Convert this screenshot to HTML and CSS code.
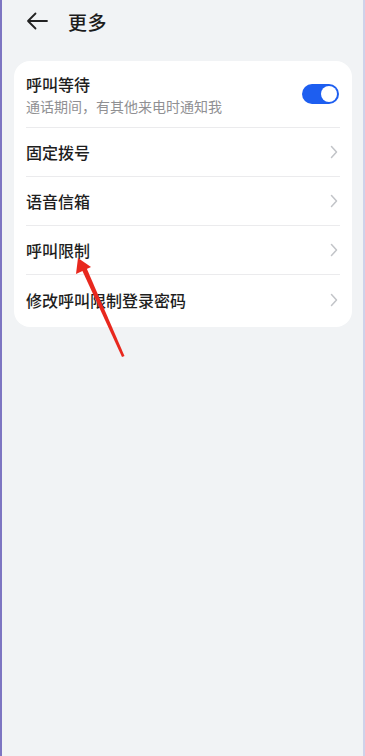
FILE: index.html
```html
<!DOCTYPE html>
<html lang="zh-CN">
<head>
    <meta charset="UTF-8">
    <meta name="viewport" content="width=device-width, initial-scale=1.0">
    <title>更多</title>
    <link rel="stylesheet" href="styles.css">
</head>
<body>
    <div class="screen">
        <!-- Header -->
        <div class="header">
            <svg class="back" width="22" height="18" viewBox="0 0 22 18">
                <path d="M21 9H2M9.5 1.5L2 9l7.5 7.5" fill="none" stroke="#222" stroke-width="1.8" stroke-linecap="round" stroke-linejoin="round"/>
            </svg>
            <h1>更多</h1>
        </div>

        <!-- Settings card -->
        <div class="card">
            <div class="row row-tall">
                <div class="row-text">
                    <div class="row-title">呼叫等待</div>
                    <div class="row-sub">通话期间，有其他来电时通知我</div>
                </div>
                <div class="switch on"><span class="knob"></span></div>
            </div>
            <div class="row">
                <div class="row-title">固定拨号</div>
                <svg class="chevron" width="8" height="14" viewBox="0 0 8 14"><path d="M1.5 1.5L6.5 7l-5 5.5" fill="none" stroke="#c2c4c8" stroke-width="1.5" stroke-linecap="round" stroke-linejoin="round"/></svg>
            </div>
            <div class="row">
                <div class="row-title">语音信箱</div>
                <svg class="chevron" width="8" height="14" viewBox="0 0 8 14"><path d="M1.5 1.5L6.5 7l-5 5.5" fill="none" stroke="#c2c4c8" stroke-width="1.5" stroke-linecap="round" stroke-linejoin="round"/></svg>
            </div>
            <div class="row">
                <div class="row-title">呼叫限制</div>
                <svg class="chevron" width="8" height="14" viewBox="0 0 8 14"><path d="M1.5 1.5L6.5 7l-5 5.5" fill="none" stroke="#c2c4c8" stroke-width="1.5" stroke-linecap="round" stroke-linejoin="round"/></svg>
            </div>
            <div class="row row-last">
                <div class="row-title">修改呼叫限制登录密码</div>
                <svg class="chevron" width="8" height="14" viewBox="0 0 8 14"><path d="M1.5 1.5L6.5 7l-5 5.5" fill="none" stroke="#c2c4c8" stroke-width="1.5" stroke-linecap="round" stroke-linejoin="round"/></svg>
            </div>
        </div>

        <!-- Red annotation arrow drawn over the screenshot -->
        <svg class="annotation" width="365" height="756" viewBox="0 0 365 756">
            <path d="M122 357L124.5 356L86.5 268L82 270Z" fill="#e8281e"/>
            <path d="M78 258L76 274L91 267Z" fill="#e8281e"/>
        </svg>
    </div>
</body>
</html>
```

FILE: styles.css
```css
* {
    margin: 0;
    padding: 0;
    box-sizing: border-box;
}

body {
    font-family: "Noto Sans CJK SC", "Noto Sans", sans-serif;
    background: #f1f3f5;
}

.screen {
    position: relative;
    width: 365px;
    height: 756px;
    background: #f1f3f5;
    border-left: 2px solid #7d75c2;
    border-right: 2px solid #cfd2ea;
    overflow: hidden;
}

/* Header */
.header {
    display: flex;
    align-items: center;
    height: 42px;
    padding-left: 24px;
}

.back {
    margin-right: 20px;
}

.header h1 {
    font-size: 19px;
    font-weight: 500;
    color: #1c1c1c;
    letter-spacing: 0.5px;
}

/* Card */
.card {
    margin: 19px 11px 0 12px;
    background: #fff;
    border-radius: 16px;
    padding: 0 12px 3px;
}

.row {
    display: flex;
    align-items: center;
    justify-content: space-between;
    height: 49px;
    border-bottom: 1px solid #ebebed;
}

.row-tall {
    height: 67px;
}

.row-last {
    border-bottom: none;
}

.row-title {
    font-size: 16px;
    font-weight: 500;
    color: #1e1e1e;
    line-height: 20px;
}

.row-sub {
    font-size: 14px;
    color: #909093;
    line-height: 19px;
    margin-top: 3px;
}

.row-tall .row-text {
    padding-top: 1px;
}

.chevron {
    margin-right: 2px;
}

/* Toggle switch */
.switch {
    position: relative;
    width: 37px;
    height: 20px;
    border-radius: 10px;
    background: #c8c8c8;
    margin-right: 1px;
}

.switch.on {
    background: #1d5ef0;
}

.switch .knob {
    position: absolute;
    top: 2px;
    right: 2px;
    width: 16px;
    height: 16px;
    border-radius: 50%;
    background: #fff;
}

.annotation {
    position: absolute;
    top: 0;
    left: -2px;
    pointer-events: none;
}
```
